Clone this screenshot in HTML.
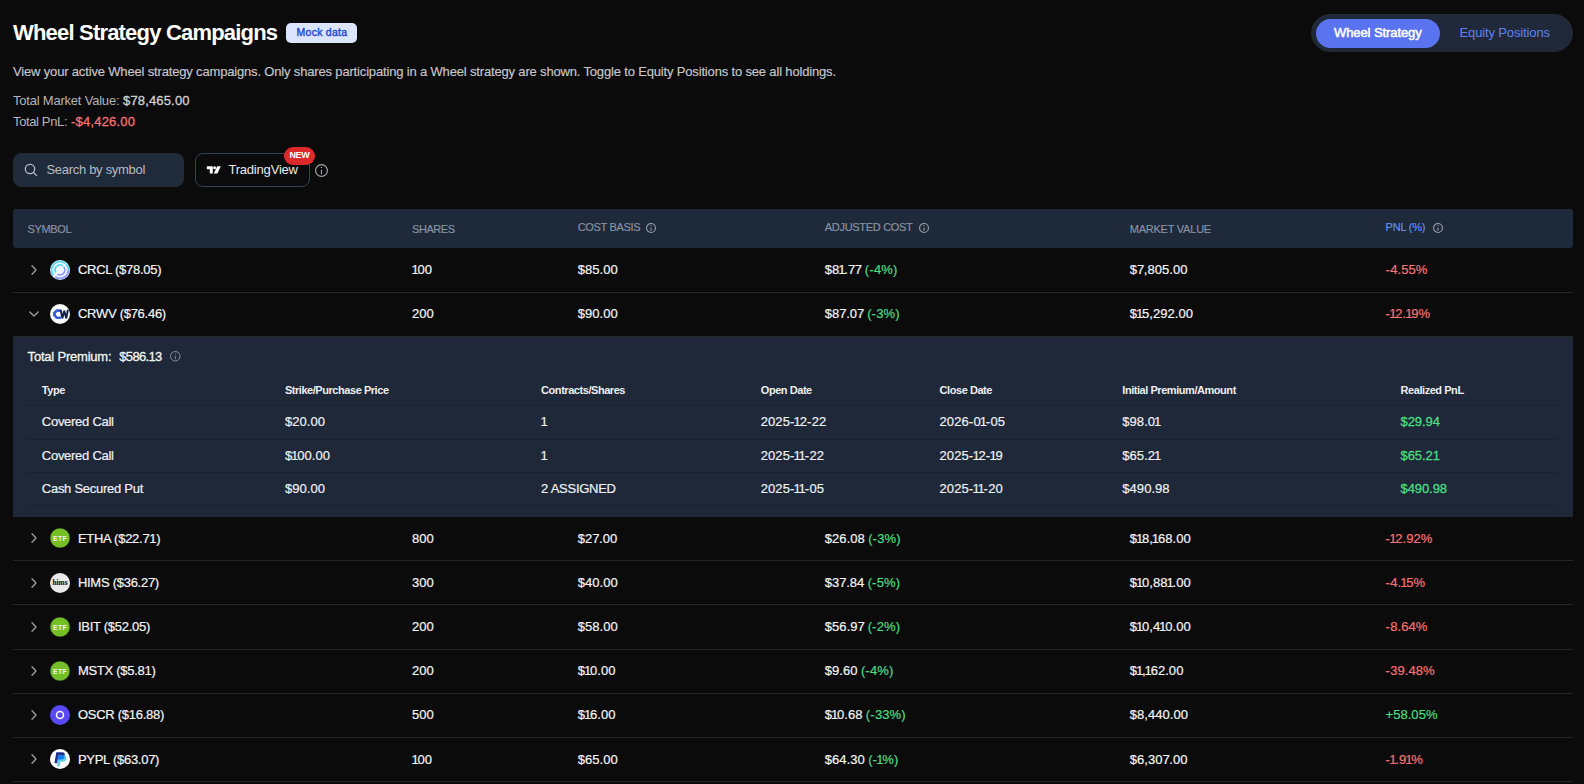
<!DOCTYPE html>
<html><head><meta charset="utf-8"><title>Wheel Strategy Campaigns</title>
<style>
html,body{margin:0;padding:0;background:#0b0b0c;}
body{width:1584px;height:784px;overflow:hidden;position:relative;font-family:"Liberation Sans",sans-serif;}
.t{position:absolute;white-space:nowrap;line-height:1;}
.r{position:absolute;}
svg.r{overflow:visible;}
</style></head><body>
<div class="t" style="left:13.00px;top:22.37px;font-size:22px;font-weight:700;color:#ffffff;letter-spacing:-0.809px;">Wheel Strategy Campaigns</div>
<div class="r" style="left:286.00px;top:23.00px;width:71.00px;height:20.00px;background:#dbe6fe;border-radius:5px"></div>
<div class="t" style="left:296.50px;top:27.11px;font-size:10.5px;font-weight:400;color:#1c49d4;letter-spacing:0.270px;-webkit-text-stroke:0.40px #1c49d4;">Mock data</div>
<div class="t" style="left:13.00px;top:64.99px;font-size:13px;font-weight:400;color:#c7c7c9;letter-spacing:-0.165px;-webkit-text-stroke:0.15px #c7c7c9;">View your active Wheel strategy campaigns. Only shares participating in a Wheel strategy are shown. Toggle to Equity Positions to see all holdings.</div>
<div class="t" style="left:13.00px;top:93.99px;font-size:13px;font-weight:400;color:#b4b4b6;letter-spacing:-0.211px;">Total Market Value:</div>
<div class="t" style="left:123.00px;top:93.99px;font-size:13px;font-weight:400;color:#d2d2d4;letter-spacing:0.160px;-webkit-text-stroke:0.30px #d2d2d4;">$78,465.00</div>
<div class="t" style="left:13.00px;top:114.99px;font-size:13px;font-weight:400;color:#b4b4b6;letter-spacing:-0.368px;">Total PnL:</div>
<div class="t" style="left:71.00px;top:114.99px;font-size:13px;font-weight:400;color:#f87171;letter-spacing:0.205px;-webkit-text-stroke:0.30px #f87171;">-$4,426.00</div>
<div class="r" style="left:1311.00px;top:14.00px;width:262.00px;height:38.00px;background:#1f2939;border-radius:19px;border:1px solid #262a31;box-sizing:border-box"></div>
<div class="r" style="left:1316.00px;top:18.70px;width:124.00px;height:29.50px;background:#5a73ef;border-radius:15px"></div>
<div class="t" style="left:1334.00px;top:25.69px;font-size:13px;font-weight:400;color:#ffffff;letter-spacing:-0.090px;-webkit-text-stroke:0.50px #ffffff;">Wheel Strategy</div>
<div class="t" style="left:1459.50px;top:25.69px;font-size:13px;font-weight:400;color:#6282f0;letter-spacing:-0.133px;">Equity Positions</div>
<div class="r" style="left:13.00px;top:153.00px;width:171.00px;height:34.00px;background:#1f2a3b;border-radius:8px;border:1px solid #242a33;box-sizing:border-box"></div>
<svg class="r" style="left:24px;top:163px" width="14" height="14" viewBox="0 0 14 14"><circle cx="6" cy="6" r="4.7" fill="none" stroke="#b9bdc5" stroke-width="1.3"/><line x1="9.5" y1="9.5" x2="12.6" y2="12.6" stroke="#b9bdc5" stroke-width="1.3" stroke-linecap="round"/></svg>
<div class="t" style="left:46.40px;top:162.79px;font-size:13px;font-weight:400;color:#b8bcc4;letter-spacing:-0.288px;">Search by symbol</div>
<div class="r" style="left:195.00px;top:153.00px;width:115.00px;height:34.00px;border:1px solid #344157;border-radius:8px;box-sizing:border-box"></div>
<svg class="r" style="left:206px;top:165px" width="16" height="10" viewBox="0 0 16 10"><path d="M0.8 1.2 H6.8 V8.6 H3.8 V4.2 H0.8 Z" fill="#fff"/><circle cx="8.6" cy="2.7" r="1.5" fill="#fff"/><path d="M11.2 1.2 H14.8 L11.4 8.6 H7.8 Z" fill="#fff"/></svg>
<div class="t" style="left:228.40px;top:162.79px;font-size:13px;font-weight:400;color:#e8e9ec;letter-spacing:-0.193px;">TradingView</div>
<div class="r" style="left:284.00px;top:147.00px;width:31.00px;height:18.00px;background:#dc2a2a;border-radius:9px"></div>
<div class="t" style="left:289.50px;top:151.08px;font-size:9px;font-weight:700;color:#ffffff;letter-spacing:-0.399px;">NEW</div>
<svg class="r" style="left:313.50px;top:162.50px" width="15" height="15" viewBox="0 0 15 15"><circle cx="7.50" cy="7.50" r="5.90" fill="none" stroke="#a3a7ad" stroke-width="1.2"/><line x1="7.50" y1="6.85" x2="7.50" y2="11.14" stroke="#a3a7ad" stroke-width="1.2"/><circle cx="7.50" cy="4.38" r="0.72" fill="#a3a7ad"/></svg>
<div class="r" style="left:13.00px;top:209.00px;width:1560.00px;height:39.00px;background:#1e2939;border-radius:3px"></div>
<div class="t" style="left:27.50px;top:223.89px;font-size:11px;font-weight:400;color:#8a94a6;letter-spacing:-0.370px;-webkit-text-stroke:0.15px #8a94a6;">SYMBOL</div>
<div class="t" style="left:412.00px;top:223.69px;font-size:11px;font-weight:400;color:#8a94a6;letter-spacing:-0.447px;-webkit-text-stroke:0.15px #8a94a6;">SHARES</div>
<div class="t" style="left:577.70px;top:221.89px;font-size:11px;font-weight:400;color:#8a94a6;letter-spacing:-0.313px;-webkit-text-stroke:0.15px #8a94a6;">COST BASIS</div>
<svg class="r" style="left:645.20px;top:222.20px" width="12" height="12" viewBox="0 0 12 12"><circle cx="6.00" cy="6.00" r="4.45" fill="none" stroke="#9aa0a8" stroke-width="1.1"/><line x1="6.00" y1="5.50" x2="6.00" y2="8.80" stroke="#9aa0a8" stroke-width="1.1"/><circle cx="6.00" cy="3.60" r="0.66" fill="#9aa0a8"/></svg>
<div class="t" style="left:824.80px;top:221.89px;font-size:11px;font-weight:400;color:#8a94a6;letter-spacing:-0.306px;-webkit-text-stroke:0.15px #8a94a6;">ADJUSTED COST</div>
<svg class="r" style="left:917.50px;top:222.20px" width="12" height="12" viewBox="0 0 12 12"><circle cx="6.00" cy="6.00" r="4.45" fill="none" stroke="#9aa0a8" stroke-width="1.1"/><line x1="6.00" y1="5.50" x2="6.00" y2="8.80" stroke="#9aa0a8" stroke-width="1.1"/><circle cx="6.00" cy="3.60" r="0.66" fill="#9aa0a8"/></svg>
<div class="t" style="left:1129.70px;top:223.69px;font-size:11px;font-weight:400;color:#8a94a6;letter-spacing:-0.223px;-webkit-text-stroke:0.15px #8a94a6;">MARKET VALUE</div>
<div class="t" style="left:1385.50px;top:222.09px;font-size:11px;font-weight:400;color:#6393f5;letter-spacing:-0.192px;-webkit-text-stroke:0.15px #6393f5;">PNL (%)</div>
<svg class="r" style="left:1432.30px;top:222.40px" width="12" height="12" viewBox="0 0 12 12"><circle cx="6.00" cy="6.00" r="4.45" fill="none" stroke="#9aa0a8" stroke-width="1.1"/><line x1="6.00" y1="5.50" x2="6.00" y2="8.80" stroke="#9aa0a8" stroke-width="1.1"/><circle cx="6.00" cy="3.60" r="0.66" fill="#9aa0a8"/></svg>
<svg class="r" style="left:29.00px;top:264.00px" width="10" height="12" viewBox="0 0 10 12"><path d="M3 1.8 L7 6 L3 10.2" fill="none" stroke="#9b9ea4" stroke-width="1.3" stroke-linecap="round" stroke-linejoin="round"/></svg>
<svg class="r" style="left:49.50px;top:260.00px" width="20" height="20" viewBox="0 0 20 20"><circle cx="10" cy="10" r="10" fill="#f3f5ff"/><path d="M3.57 15.40 A8.40 8.40 0 1 1 18.40 10.00" fill="none" stroke="#5bd8f2" stroke-width="1.90"/><path d="M18.40 10.00 A8.40 8.40 0 0 1 5.18 16.88" fill="none" stroke="#8d9ef7" stroke-width="1.90"/><path d="M5.76 12.45 A4.90 4.90 0 0 1 13.46 6.54" fill="none" stroke="#5bd8f2" stroke-width="1.80"/><path d="M13.46 6.54 A4.90 4.90 0 0 1 7.19 14.01" fill="none" stroke="#8d9ef7" stroke-width="1.80"/><line x1="16.4" y1="3.2" x2="3.6" y2="16.8" stroke="#f3f5ff" stroke-width="1.1"/></svg>
<div class="t" style="left:77.90px;top:262.99px;font-size:13px;font-weight:400;color:#f4f4f5;letter-spacing:-0.270px;-webkit-text-stroke:0.20px #f4f4f5;">CRCL ($78.05)</div>
<div class="t" style="left:412.00px;top:262.99px;font-size:13px;font-weight:400;color:#f4f4f5;letter-spacing:0.050px;-webkit-text-stroke:0.20px #f4f4f5;"><span style="margin-left:-0.60px;letter-spacing:-1.15px">1</span>00</div>
<div class="t" style="left:577.70px;top:262.99px;font-size:13px;font-weight:400;color:#f4f4f5;letter-spacing:0.050px;-webkit-text-stroke:0.20px #f4f4f5;">$85.00</div>
<div class="t" style="left:824.80px;top:262.99px;font-size:13px;font-weight:400;color:#f4f4f5;letter-spacing:0.050px;-webkit-text-stroke:0.20px #f4f4f5;">$8<span style="margin-left:-1.10px;letter-spacing:-1.15px">1</span>.<span style="letter-spacing:-0.45px">7</span><span style="letter-spacing:-0.45px">7</span></div>
<div class="t" style="left:864.86px;top:262.99px;font-size:13px;font-weight:400;color:#4ade80;letter-spacing:0.050px;-webkit-text-stroke:0.20px #4ade80;">(<span style="letter-spacing:0.45px">-</span>4%)</div>
<div class="t" style="left:1129.70px;top:262.99px;font-size:13px;font-weight:400;color:#f4f4f5;letter-spacing:0.050px;-webkit-text-stroke:0.20px #f4f4f5;">$<span style="letter-spacing:-0.45px">7</span>,805.00</div>
<div class="t" style="left:1385.50px;top:262.99px;font-size:13px;font-weight:400;color:#f87171;letter-spacing:0.050px;-webkit-text-stroke:0.20px #f87171;"><span style="letter-spacing:0.45px">-</span>4.55%</div>
<div class="r" style="left:13.00px;top:292.00px;width:1560.00px;height:1.00px;background:#262628"></div>
<svg class="r" style="left:27.50px;top:309.40px" width="12" height="10" viewBox="0 0 12 10"><path d="M1.8 3 L6 7 L10.2 3" fill="none" stroke="#9b9ea4" stroke-width="1.3" stroke-linecap="round" stroke-linejoin="round"/></svg>
<svg class="r" style="left:49.50px;top:303.90px" width="20" height="20" viewBox="0 0 20 20"><circle cx="10" cy="10" r="10" fill="#f9fafc"/><path d="M10.6 5.3 H6.2 L3.0 8.6 V11.6 L6.2 15.0 H11.0 V12.4 H7.4 L5.9 10.9 V9.3 L7.4 7.9 H10.6 Z" fill="#3a5ed8"/><polyline points="10.6,5.8 12.4,14.3 14.3,6.8 16.2,14.3 18.0,5.8" fill="none" stroke="#141f45" stroke-width="1.9" stroke-linejoin="bevel"/></svg>
<div class="t" style="left:77.90px;top:306.89px;font-size:13px;font-weight:400;color:#f4f4f5;letter-spacing:-0.270px;-webkit-text-stroke:0.20px #f4f4f5;">CRWV ($76.46)</div>
<div class="t" style="left:412.00px;top:306.89px;font-size:13px;font-weight:400;color:#f4f4f5;letter-spacing:0.050px;-webkit-text-stroke:0.20px #f4f4f5;">200</div>
<div class="t" style="left:577.70px;top:306.89px;font-size:13px;font-weight:400;color:#f4f4f5;letter-spacing:0.050px;-webkit-text-stroke:0.20px #f4f4f5;">$90.00</div>
<div class="t" style="left:824.80px;top:306.89px;font-size:13px;font-weight:400;color:#f4f4f5;letter-spacing:0.050px;-webkit-text-stroke:0.20px #f4f4f5;">$8<span style="letter-spacing:-0.45px">7</span>.0<span style="letter-spacing:-0.45px">7</span></div>
<div class="t" style="left:867.16px;top:306.89px;font-size:13px;font-weight:400;color:#4ade80;letter-spacing:0.050px;-webkit-text-stroke:0.20px #4ade80;">(<span style="letter-spacing:0.45px">-</span>3%)</div>
<div class="t" style="left:1129.70px;top:306.89px;font-size:13px;font-weight:400;color:#f4f4f5;letter-spacing:0.050px;-webkit-text-stroke:0.20px #f4f4f5;">$<span style="margin-left:-1.10px;letter-spacing:-1.15px">1</span>5,292.00</div>
<div class="t" style="left:1385.50px;top:306.89px;font-size:13px;font-weight:400;color:#f87171;letter-spacing:0.050px;-webkit-text-stroke:0.20px #f87171;"><span style="letter-spacing:0.45px">-</span><span style="margin-left:-1.10px;letter-spacing:-1.15px">1</span>2.<span style="margin-left:-1.10px;letter-spacing:-1.15px">1</span>9%</div>
<svg class="r" style="left:29.00px;top:532.40px" width="10" height="12" viewBox="0 0 10 12"><path d="M3 1.8 L7 6 L3 10.2" fill="none" stroke="#9b9ea4" stroke-width="1.3" stroke-linecap="round" stroke-linejoin="round"/></svg>
<svg class="r" style="left:49.50px;top:528.40px" width="20" height="20" viewBox="0 0 20 20"><circle cx="10" cy="10" r="9.8" fill="#74bf24" stroke="#2b4d2a" stroke-width="0.3"/><text x="10" y="12.5" text-anchor="middle" font-family="Liberation Sans" font-weight="700" font-size="6.8" fill="#f6f4fb" letter-spacing="0.45">ETF</text></svg>
<div class="t" style="left:77.90px;top:532.39px;font-size:13px;font-weight:400;color:#f4f4f5;letter-spacing:-0.270px;-webkit-text-stroke:0.20px #f4f4f5;">ETHA ($22.71)</div>
<div class="t" style="left:412.00px;top:532.39px;font-size:13px;font-weight:400;color:#f4f4f5;letter-spacing:0.050px;-webkit-text-stroke:0.20px #f4f4f5;">800</div>
<div class="t" style="left:577.70px;top:532.39px;font-size:13px;font-weight:400;color:#f4f4f5;letter-spacing:0.050px;-webkit-text-stroke:0.20px #f4f4f5;">$2<span style="letter-spacing:-0.45px">7</span>.00</div>
<div class="t" style="left:824.80px;top:532.39px;font-size:13px;font-weight:400;color:#f4f4f5;letter-spacing:0.050px;-webkit-text-stroke:0.20px #f4f4f5;">$26.08</div>
<div class="t" style="left:868.16px;top:532.39px;font-size:13px;font-weight:400;color:#4ade80;letter-spacing:0.050px;-webkit-text-stroke:0.20px #4ade80;">(<span style="letter-spacing:0.45px">-</span>3%)</div>
<div class="t" style="left:1129.70px;top:532.39px;font-size:13px;font-weight:400;color:#f4f4f5;letter-spacing:0.050px;-webkit-text-stroke:0.20px #f4f4f5;">$<span style="margin-left:-1.10px;letter-spacing:-1.15px">1</span>8,<span style="margin-left:-1.10px;letter-spacing:-1.15px">1</span>68.00</div>
<div class="t" style="left:1385.50px;top:532.39px;font-size:13px;font-weight:400;color:#f87171;letter-spacing:0.050px;-webkit-text-stroke:0.20px #f87171;"><span style="letter-spacing:0.45px">-</span><span style="margin-left:-1.10px;letter-spacing:-1.15px">1</span>2.92%</div>
<div class="r" style="left:13.00px;top:560.00px;width:1560.00px;height:1.00px;background:#262628"></div>
<svg class="r" style="left:29.00px;top:577.00px" width="10" height="12" viewBox="0 0 10 12"><path d="M3 1.8 L7 6 L3 10.2" fill="none" stroke="#9b9ea4" stroke-width="1.3" stroke-linecap="round" stroke-linejoin="round"/></svg>
<svg class="r" style="left:49.50px;top:573.00px" width="20" height="20" viewBox="0 0 20 20"><circle cx="10" cy="10" r="10" fill="#eaeaea"/><text x="10" y="12.3" text-anchor="middle" font-family="Liberation Serif" font-weight="700" font-size="7.2" fill="#141414" stroke="#141414" stroke-width="0.15" letter-spacing="0.05">hims</text></svg>
<div class="t" style="left:77.90px;top:575.99px;font-size:13px;font-weight:400;color:#f4f4f5;letter-spacing:-0.270px;-webkit-text-stroke:0.20px #f4f4f5;">HIMS ($36.27)</div>
<div class="t" style="left:412.00px;top:575.99px;font-size:13px;font-weight:400;color:#f4f4f5;letter-spacing:0.050px;-webkit-text-stroke:0.20px #f4f4f5;">300</div>
<div class="t" style="left:577.70px;top:575.99px;font-size:13px;font-weight:400;color:#f4f4f5;letter-spacing:0.050px;-webkit-text-stroke:0.20px #f4f4f5;">$40.00</div>
<div class="t" style="left:824.80px;top:575.99px;font-size:13px;font-weight:400;color:#f4f4f5;letter-spacing:0.050px;-webkit-text-stroke:0.20px #f4f4f5;">$3<span style="letter-spacing:-0.45px">7</span>.84</div>
<div class="t" style="left:867.66px;top:575.99px;font-size:13px;font-weight:400;color:#4ade80;letter-spacing:0.050px;-webkit-text-stroke:0.20px #4ade80;">(<span style="letter-spacing:0.45px">-</span>5%)</div>
<div class="t" style="left:1129.70px;top:575.99px;font-size:13px;font-weight:400;color:#f4f4f5;letter-spacing:0.050px;-webkit-text-stroke:0.20px #f4f4f5;">$<span style="margin-left:-1.10px;letter-spacing:-1.15px">1</span>0,88<span style="margin-left:-1.10px;letter-spacing:-1.15px">1</span>.00</div>
<div class="t" style="left:1385.50px;top:575.99px;font-size:13px;font-weight:400;color:#f87171;letter-spacing:0.050px;-webkit-text-stroke:0.20px #f87171;"><span style="letter-spacing:0.45px">-</span>4.<span style="margin-left:-1.10px;letter-spacing:-1.15px">1</span>5%</div>
<div class="r" style="left:13.00px;top:604.00px;width:1560.00px;height:1.00px;background:#262628"></div>
<svg class="r" style="left:29.00px;top:621.10px" width="10" height="12" viewBox="0 0 10 12"><path d="M3 1.8 L7 6 L3 10.2" fill="none" stroke="#9b9ea4" stroke-width="1.3" stroke-linecap="round" stroke-linejoin="round"/></svg>
<svg class="r" style="left:49.50px;top:617.10px" width="20" height="20" viewBox="0 0 20 20"><circle cx="10" cy="10" r="9.8" fill="#74bf24" stroke="#2b4d2a" stroke-width="0.3"/><text x="10" y="12.5" text-anchor="middle" font-family="Liberation Sans" font-weight="700" font-size="6.8" fill="#f6f4fb" letter-spacing="0.45">ETF</text></svg>
<div class="t" style="left:77.90px;top:620.09px;font-size:13px;font-weight:400;color:#f4f4f5;letter-spacing:-0.270px;-webkit-text-stroke:0.20px #f4f4f5;">IBIT ($52.05)</div>
<div class="t" style="left:412.00px;top:620.09px;font-size:13px;font-weight:400;color:#f4f4f5;letter-spacing:0.050px;-webkit-text-stroke:0.20px #f4f4f5;">200</div>
<div class="t" style="left:577.70px;top:620.09px;font-size:13px;font-weight:400;color:#f4f4f5;letter-spacing:0.050px;-webkit-text-stroke:0.20px #f4f4f5;">$58.00</div>
<div class="t" style="left:824.80px;top:620.09px;font-size:13px;font-weight:400;color:#f4f4f5;letter-spacing:0.050px;-webkit-text-stroke:0.20px #f4f4f5;">$56.9<span style="letter-spacing:-0.45px">7</span></div>
<div class="t" style="left:867.66px;top:620.09px;font-size:13px;font-weight:400;color:#4ade80;letter-spacing:0.050px;-webkit-text-stroke:0.20px #4ade80;">(<span style="letter-spacing:0.45px">-</span>2%)</div>
<div class="t" style="left:1129.70px;top:620.09px;font-size:13px;font-weight:400;color:#f4f4f5;letter-spacing:0.050px;-webkit-text-stroke:0.20px #f4f4f5;">$<span style="margin-left:-1.10px;letter-spacing:-1.15px">1</span>0,4<span style="margin-left:-1.10px;letter-spacing:-1.15px">1</span>0.00</div>
<div class="t" style="left:1385.50px;top:620.09px;font-size:13px;font-weight:400;color:#f87171;letter-spacing:0.050px;-webkit-text-stroke:0.20px #f87171;"><span style="letter-spacing:0.45px">-</span>8.64%</div>
<div class="r" style="left:13.00px;top:649.00px;width:1560.00px;height:1.00px;background:#262628"></div>
<svg class="r" style="left:29.00px;top:665.20px" width="10" height="12" viewBox="0 0 10 12"><path d="M3 1.8 L7 6 L3 10.2" fill="none" stroke="#9b9ea4" stroke-width="1.3" stroke-linecap="round" stroke-linejoin="round"/></svg>
<svg class="r" style="left:49.50px;top:661.20px" width="20" height="20" viewBox="0 0 20 20"><circle cx="10" cy="10" r="9.8" fill="#74bf24" stroke="#2b4d2a" stroke-width="0.3"/><text x="10" y="12.5" text-anchor="middle" font-family="Liberation Sans" font-weight="700" font-size="6.8" fill="#f6f4fb" letter-spacing="0.45">ETF</text></svg>
<div class="t" style="left:77.90px;top:664.19px;font-size:13px;font-weight:400;color:#f4f4f5;letter-spacing:-0.270px;-webkit-text-stroke:0.20px #f4f4f5;">MSTX ($5.81)</div>
<div class="t" style="left:412.00px;top:664.19px;font-size:13px;font-weight:400;color:#f4f4f5;letter-spacing:0.050px;-webkit-text-stroke:0.20px #f4f4f5;">200</div>
<div class="t" style="left:577.70px;top:664.19px;font-size:13px;font-weight:400;color:#f4f4f5;letter-spacing:0.050px;-webkit-text-stroke:0.20px #f4f4f5;">$<span style="margin-left:-1.10px;letter-spacing:-1.15px">1</span>0.00</div>
<div class="t" style="left:824.80px;top:664.19px;font-size:13px;font-weight:400;color:#f4f4f5;letter-spacing:0.050px;-webkit-text-stroke:0.20px #f4f4f5;">$9.60</div>
<div class="t" style="left:860.88px;top:664.19px;font-size:13px;font-weight:400;color:#4ade80;letter-spacing:0.050px;-webkit-text-stroke:0.20px #4ade80;">(<span style="letter-spacing:0.45px">-</span>4%)</div>
<div class="t" style="left:1129.70px;top:664.19px;font-size:13px;font-weight:400;color:#f4f4f5;letter-spacing:0.050px;-webkit-text-stroke:0.20px #f4f4f5;">$<span style="margin-left:-1.10px;letter-spacing:-1.15px">1</span>,<span style="margin-left:-1.10px;letter-spacing:-1.15px">1</span>62.00</div>
<div class="t" style="left:1385.50px;top:664.19px;font-size:13px;font-weight:400;color:#f87171;letter-spacing:0.050px;-webkit-text-stroke:0.20px #f87171;"><span style="letter-spacing:0.45px">-</span>39.48%</div>
<div class="r" style="left:13.00px;top:693.00px;width:1560.00px;height:1.00px;background:#262628"></div>
<svg class="r" style="left:29.00px;top:709.30px" width="10" height="12" viewBox="0 0 10 12"><path d="M3 1.8 L7 6 L3 10.2" fill="none" stroke="#9b9ea4" stroke-width="1.3" stroke-linecap="round" stroke-linejoin="round"/></svg>
<svg class="r" style="left:49.50px;top:705.30px" width="20" height="20" viewBox="0 0 20 20"><circle cx="10" cy="10" r="10" fill="#5849f4"/><circle cx="10" cy="10" r="3.5" fill="none" stroke="#fff" stroke-width="1.5"/></svg>
<div class="t" style="left:77.90px;top:708.29px;font-size:13px;font-weight:400;color:#f4f4f5;letter-spacing:-0.270px;-webkit-text-stroke:0.20px #f4f4f5;">OSCR ($16.88)</div>
<div class="t" style="left:412.00px;top:708.29px;font-size:13px;font-weight:400;color:#f4f4f5;letter-spacing:0.050px;-webkit-text-stroke:0.20px #f4f4f5;">500</div>
<div class="t" style="left:577.70px;top:708.29px;font-size:13px;font-weight:400;color:#f4f4f5;letter-spacing:0.050px;-webkit-text-stroke:0.20px #f4f4f5;">$<span style="margin-left:-1.10px;letter-spacing:-1.15px">1</span>6.00</div>
<div class="t" style="left:824.80px;top:708.29px;font-size:13px;font-weight:400;color:#f4f4f5;letter-spacing:0.050px;-webkit-text-stroke:0.20px #f4f4f5;">$<span style="margin-left:-1.10px;letter-spacing:-1.15px">1</span>0.68</div>
<div class="t" style="left:865.86px;top:708.29px;font-size:13px;font-weight:400;color:#4ade80;letter-spacing:0.050px;-webkit-text-stroke:0.20px #4ade80;">(<span style="letter-spacing:0.45px">-</span>33%)</div>
<div class="t" style="left:1129.70px;top:708.29px;font-size:13px;font-weight:400;color:#f4f4f5;letter-spacing:0.050px;-webkit-text-stroke:0.20px #f4f4f5;">$8,440.00</div>
<div class="t" style="left:1385.50px;top:708.29px;font-size:13px;font-weight:400;color:#4ade80;letter-spacing:0.050px;-webkit-text-stroke:0.20px #4ade80;">+58.05%</div>
<div class="r" style="left:13.00px;top:737.00px;width:1560.00px;height:1.00px;background:#262628"></div>
<svg class="r" style="left:29.00px;top:753.40px" width="10" height="12" viewBox="0 0 10 12"><path d="M3 1.8 L7 6 L3 10.2" fill="none" stroke="#9b9ea4" stroke-width="1.3" stroke-linecap="round" stroke-linejoin="round"/></svg>
<svg class="r" style="left:49.50px;top:749.40px" width="20" height="20" viewBox="0 0 20 20"><circle cx="10" cy="10" r="10" fill="#ffffff"/><path d="M6.3 3.3 H12.4 Q15.2 3.4 14.7 6.4 L14.5 7.3 H8.5 L7.3 14.3 H4.4 Z" fill="#22338f"/><path d="M8.2 6.6 H13.9 Q17.0 6.9 16.4 10.0 Q15.8 12.8 12.8 12.8 H10.4 L9.6 17.6 H7.0 Z" fill="#62cfe6"/><path d="M8.2 6.6 H14.6 L14.2 9.0 Q13.6 10.4 12.0 10.4 H7.6 Z" fill="#0c7ff4"/></svg>
<div class="t" style="left:77.90px;top:753.39px;font-size:13px;font-weight:400;color:#f4f4f5;letter-spacing:-0.270px;-webkit-text-stroke:0.20px #f4f4f5;">PYPL ($63.07)</div>
<div class="t" style="left:412.00px;top:753.39px;font-size:13px;font-weight:400;color:#f4f4f5;letter-spacing:0.050px;-webkit-text-stroke:0.20px #f4f4f5;"><span style="margin-left:-0.60px;letter-spacing:-1.15px">1</span>00</div>
<div class="t" style="left:577.70px;top:753.39px;font-size:13px;font-weight:400;color:#f4f4f5;letter-spacing:0.050px;-webkit-text-stroke:0.20px #f4f4f5;">$65.00</div>
<div class="t" style="left:824.80px;top:753.39px;font-size:13px;font-weight:400;color:#f4f4f5;letter-spacing:0.050px;-webkit-text-stroke:0.20px #f4f4f5;">$64.30</div>
<div class="t" style="left:868.16px;top:753.39px;font-size:13px;font-weight:400;color:#4ade80;letter-spacing:0.050px;-webkit-text-stroke:0.20px #4ade80;">(<span style="letter-spacing:0.45px">-</span><span style="margin-left:-1.10px;letter-spacing:-1.15px">1</span>%)</div>
<div class="t" style="left:1129.70px;top:753.39px;font-size:13px;font-weight:400;color:#f4f4f5;letter-spacing:0.050px;-webkit-text-stroke:0.20px #f4f4f5;">$6,30<span style="letter-spacing:-0.45px">7</span>.00</div>
<div class="t" style="left:1385.50px;top:753.39px;font-size:13px;font-weight:400;color:#f87171;letter-spacing:0.050px;-webkit-text-stroke:0.20px #f87171;"><span style="letter-spacing:0.45px">-</span><span style="margin-left:-1.10px;letter-spacing:-1.15px">1</span>.9<span style="margin-left:-1.10px;letter-spacing:-1.15px">1</span>%</div>
<div class="r" style="left:13.00px;top:781.00px;width:1560.00px;height:1.00px;background:#262628"></div>
<div class="r" style="left:13.00px;top:336.00px;width:1560.00px;height:1.00px;background:#262628"></div>
<div class="r" style="left:13.00px;top:337.00px;width:1560.00px;height:180.00px;background:#1e2839"></div>
<div class="t" style="left:27.60px;top:349.89px;font-size:13px;font-weight:400;color:#f4f4f5;letter-spacing:-0.207px;-webkit-text-stroke:0.30px #f4f4f5;">Total Premium:</div>
<div class="t" style="left:119.30px;top:349.89px;font-size:13px;font-weight:400;color:#f4f4f5;letter-spacing:-0.664px;-webkit-text-stroke:0.30px #f4f4f5;">$586.13</div>
<svg class="r" style="left:169.15px;top:350.15px" width="12.5" height="12.5" viewBox="0 0 12.5 12.5"><circle cx="6.25" cy="6.25" r="4.75" fill="none" stroke="#8d929a" stroke-width="1.0"/><line x1="6.25" y1="5.72" x2="6.25" y2="9.19" stroke="#8d929a" stroke-width="1.0"/><circle cx="6.25" cy="3.73" r="0.60" fill="#8d929a"/></svg>
<div class="t" style="left:41.80px;top:384.79px;font-size:11px;font-weight:700;color:#eceef1;letter-spacing:-0.450px;">Type</div>
<div class="t" style="left:284.90px;top:384.79px;font-size:11px;font-weight:700;color:#eceef1;letter-spacing:-0.450px;">Strike/Purchase Price</div>
<div class="t" style="left:541.10px;top:384.79px;font-size:11px;font-weight:700;color:#eceef1;letter-spacing:-0.450px;">Contracts/Shares</div>
<div class="t" style="left:760.80px;top:384.79px;font-size:11px;font-weight:700;color:#eceef1;letter-spacing:-0.450px;">Open Date</div>
<div class="t" style="left:939.60px;top:384.79px;font-size:11px;font-weight:700;color:#eceef1;letter-spacing:-0.450px;">Close Date</div>
<div class="t" style="left:1122.30px;top:384.79px;font-size:11px;font-weight:700;color:#eceef1;letter-spacing:-0.450px;">Initial Premium/Amount</div>
<div class="t" style="left:1400.60px;top:384.79px;font-size:11px;font-weight:700;color:#eceef1;letter-spacing:-0.450px;">Realized PnL</div>
<div class="r" style="left:27.00px;top:405.00px;width:1530.00px;height:1.00px;background:#1c2028"></div>
<div class="r" style="left:27.00px;top:438.80px;width:1530.00px;height:1.00px;background:#1c2028"></div>
<div class="r" style="left:27.00px;top:472.30px;width:1530.00px;height:1.00px;background:#1c2028"></div>
<div class="r" style="left:27.00px;top:505.40px;width:1530.00px;height:1.00px;background:#1c2028"></div>
<div class="t" style="left:41.80px;top:415.09px;font-size:13px;font-weight:400;color:#eef0f3;letter-spacing:-0.270px;-webkit-text-stroke:0.20px #eef0f3;">Covered Call</div>
<div class="t" style="left:284.90px;top:415.09px;font-size:13px;font-weight:400;color:#eef0f3;letter-spacing:0.050px;-webkit-text-stroke:0.20px #eef0f3;">$20.00</div>
<div class="t" style="left:541.10px;top:415.09px;font-size:13px;font-weight:400;color:#eef0f3;letter-spacing:0.050px;-webkit-text-stroke:0.20px #eef0f3;"><span style="margin-left:-0.60px;letter-spacing:-1.15px">1</span></div>
<div class="t" style="left:760.80px;top:415.09px;font-size:13px;font-weight:400;color:#eef0f3;letter-spacing:0.050px;-webkit-text-stroke:0.20px #eef0f3;">2025<span style="letter-spacing:0.45px">-</span><span style="margin-left:-1.10px;letter-spacing:-1.15px">1</span>2<span style="letter-spacing:0.45px">-</span>22</div>
<div class="t" style="left:939.60px;top:415.09px;font-size:13px;font-weight:400;color:#eef0f3;letter-spacing:0.050px;-webkit-text-stroke:0.20px #eef0f3;">2026<span style="letter-spacing:0.45px">-</span>0<span style="margin-left:-1.10px;letter-spacing:-1.15px">1</span><span style="letter-spacing:0.45px">-</span>05</div>
<div class="t" style="left:1122.30px;top:415.09px;font-size:13px;font-weight:400;color:#eef0f3;letter-spacing:0.050px;-webkit-text-stroke:0.20px #eef0f3;">$98.0<span style="margin-left:-1.10px;letter-spacing:-1.15px">1</span></div>
<div class="t" style="left:1400.60px;top:415.09px;font-size:13px;font-weight:400;color:#4ade80;letter-spacing:-0.100px;-webkit-text-stroke:0.30px #4ade80;">$29.94</div>
<div class="t" style="left:41.80px;top:449.19px;font-size:13px;font-weight:400;color:#eef0f3;letter-spacing:-0.270px;-webkit-text-stroke:0.20px #eef0f3;">Covered Call</div>
<div class="t" style="left:284.90px;top:449.19px;font-size:13px;font-weight:400;color:#eef0f3;letter-spacing:0.050px;-webkit-text-stroke:0.20px #eef0f3;">$<span style="margin-left:-1.10px;letter-spacing:-1.15px">1</span>00.00</div>
<div class="t" style="left:541.10px;top:449.19px;font-size:13px;font-weight:400;color:#eef0f3;letter-spacing:0.050px;-webkit-text-stroke:0.20px #eef0f3;"><span style="margin-left:-0.60px;letter-spacing:-1.15px">1</span></div>
<div class="t" style="left:760.80px;top:449.19px;font-size:13px;font-weight:400;color:#eef0f3;letter-spacing:0.050px;-webkit-text-stroke:0.20px #eef0f3;">2025<span style="letter-spacing:0.45px">-</span><span style="margin-left:-1.10px;letter-spacing:-1.15px">1</span><span style="margin-left:-1.10px;letter-spacing:-1.15px">1</span><span style="letter-spacing:0.45px">-</span>22</div>
<div class="t" style="left:939.60px;top:449.19px;font-size:13px;font-weight:400;color:#eef0f3;letter-spacing:0.050px;-webkit-text-stroke:0.20px #eef0f3;">2025<span style="letter-spacing:0.45px">-</span><span style="margin-left:-1.10px;letter-spacing:-1.15px">1</span>2<span style="letter-spacing:0.45px">-</span><span style="margin-left:-1.10px;letter-spacing:-1.15px">1</span>9</div>
<div class="t" style="left:1122.30px;top:449.19px;font-size:13px;font-weight:400;color:#eef0f3;letter-spacing:0.050px;-webkit-text-stroke:0.20px #eef0f3;">$65.2<span style="margin-left:-1.10px;letter-spacing:-1.15px">1</span></div>
<div class="t" style="left:1400.60px;top:449.19px;font-size:13px;font-weight:400;color:#4ade80;letter-spacing:-0.100px;-webkit-text-stroke:0.30px #4ade80;">$65.21</div>
<div class="t" style="left:41.80px;top:482.19px;font-size:13px;font-weight:400;color:#eef0f3;letter-spacing:-0.270px;-webkit-text-stroke:0.20px #eef0f3;">Cash Secured Put</div>
<div class="t" style="left:284.90px;top:482.19px;font-size:13px;font-weight:400;color:#eef0f3;letter-spacing:0.050px;-webkit-text-stroke:0.20px #eef0f3;">$90.00</div>
<div class="t" style="left:541.10px;top:482.19px;font-size:13px;font-weight:400;color:#eef0f3;letter-spacing:-0.270px;-webkit-text-stroke:0.20px #eef0f3;">2 ASSIGNED</div>
<div class="t" style="left:760.80px;top:482.19px;font-size:13px;font-weight:400;color:#eef0f3;letter-spacing:0.050px;-webkit-text-stroke:0.20px #eef0f3;">2025<span style="letter-spacing:0.45px">-</span><span style="margin-left:-1.10px;letter-spacing:-1.15px">1</span><span style="margin-left:-1.10px;letter-spacing:-1.15px">1</span><span style="letter-spacing:0.45px">-</span>05</div>
<div class="t" style="left:939.60px;top:482.19px;font-size:13px;font-weight:400;color:#eef0f3;letter-spacing:0.050px;-webkit-text-stroke:0.20px #eef0f3;">2025<span style="letter-spacing:0.45px">-</span><span style="margin-left:-1.10px;letter-spacing:-1.15px">1</span><span style="margin-left:-1.10px;letter-spacing:-1.15px">1</span><span style="letter-spacing:0.45px">-</span>20</div>
<div class="t" style="left:1122.30px;top:482.19px;font-size:13px;font-weight:400;color:#eef0f3;letter-spacing:0.050px;-webkit-text-stroke:0.20px #eef0f3;">$490.98</div>
<div class="t" style="left:1400.60px;top:482.19px;font-size:13px;font-weight:400;color:#4ade80;letter-spacing:-0.100px;-webkit-text-stroke:0.30px #4ade80;">$490.98</div>
</body></html>
